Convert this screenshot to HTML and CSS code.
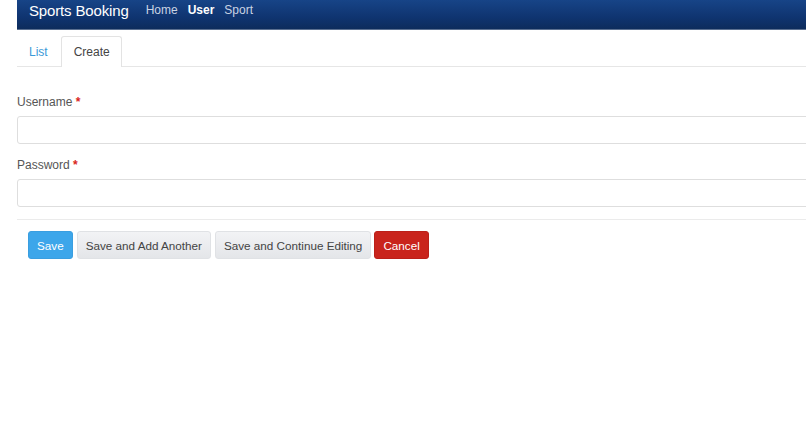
FILE: index.html
```html
<!DOCTYPE html>
<html>
<head>
<meta charset="utf-8">
<link rel="stylesheet" href="styles.css">
</head>
<body>
<div class="page">
  <nav class="navbar">
    <span class="brand">Sports Booking</span>
    <a class="nav-link">Home</a>
    <a class="nav-link active">User</a>
    <a class="nav-link">Sport</a>
  </nav>
  <ul class="tabs">
    <li class="tab"><a class="tab-link">List</a></li>
    <li class="tab current"><a class="tab-link">Create</a></li>
  </ul>
  <form class="form">
    <div class="field">
      <label class="label">Username <span class="req">*</span></label>
      <input class="input" type="text">
    </div>
    <div class="field">
      <label class="label">Password <span class="req">*</span></label>
      <input class="input" type="password">
    </div>
    <div class="divider"></div>
    <div class="actions">
      <button type="button" class="btn btn-primary">Save</button>
      <button type="button" class="btn btn-default">Save and Add Another</button>
      <button type="button" class="btn btn-default">Save and Continue Editing</button>
      <button type="button" class="btn btn-danger">Cancel</button>
    </div>
  </form>
</div>
</body>
</html>
```
FILE: styles.css
```css
html, body {
  margin: 0;
  padding: 0;
  background: #fff;
  overflow: hidden;
}
body {
  font-family: "Liberation Sans", Arial, sans-serif;
  color: #555;
  font-size: 12px;
}
.page {
  padding-left: 17px;
  width: 820px;
}
.navbar {
  height: 30px;
  display: flex;
  align-items: flex-start;
  padding: 2px 0 0 12px;
  background: linear-gradient(to bottom, #174487 0%, #0f3470 60%, #0d2c5c 100%);
  border-bottom: 1px solid #5a6f90;
  box-sizing: border-box;
}
.brand {
  color: #fff;
  font-size: 15px;
  line-height: 17px;
  margin-right: 17px;
  letter-spacing: -0.15px;
}
.nav-link {
  color: #c9d3e3;
  font-size: 12px;
  line-height: 17px;
  margin-right: 10px;
}
.nav-link.active {
  color: #fff;
  font-weight: bold;
}
.tabs {
  list-style: none;
  margin: 6px 0 0 0;
  padding: 0;
  display: flex;
  height: 31px;
  border-bottom: 1px solid #e6e6e6;
  box-sizing: border-box;
}
.tab {
  display: flex;
}
.tab-link {
  display: flex;
  align-items: center;
  padding: 0 12px 0 11px;
  font-size: 12px;
  color: #3b9ad8;
  border: 1px solid transparent;
  border-bottom: none;
  border-radius: 3px 3px 0 0;
}
.tab.current .tab-link {
  color: #444;
  background: #fff;
  border-color: #e3e3e3;
  padding: 0 11px 0 12px;
  margin-bottom: -1px;
  height: 31px;
  box-sizing: border-box;
}
.form {
  padding-top: 28px;
}
.field {
  margin-bottom: 14px;
}
.label {
  display: block;
  font-size: 12px;
  color: #555;
  margin-bottom: 6px;
  line-height: 15px;
}
.req {
  color: #d9251d;
  font-weight: bold;
}
.input {
  display: block;
  width: 100%;
  height: 28px;
  box-sizing: border-box;
  border: 1px solid #dedede;
  border-radius: 3px;
  background: #fff;
  margin: 0;
  padding: 4px 8px;
}
.divider {
  border-top: 1px solid #ebebeb;
  margin-top: -2px;
}
.actions {
  display: flex;
  gap: 4px;
  padding: 11px 0 0 11px;
}
.btn {
  height: 28px;
  font-family: "Liberation Sans", Arial, sans-serif;
  font-size: 11.7px;
  padding: 0 8px;
  border-radius: 3px;
  border: 1px solid transparent;
  cursor: pointer;
}
.btn-primary {
  background: #3da6ea;
  color: #fff;
  border-color: #3a9ee0;
}
.btn-default {
  background: linear-gradient(to bottom, #f2f3f5, #e4e6e9);
  color: #444;
  border-color: #e0e2e5;
}
.btn-danger {
  background: #c9241c;
  color: #fff;
  border-color: #bb2019;
  margin-left: -1px;
}
```
